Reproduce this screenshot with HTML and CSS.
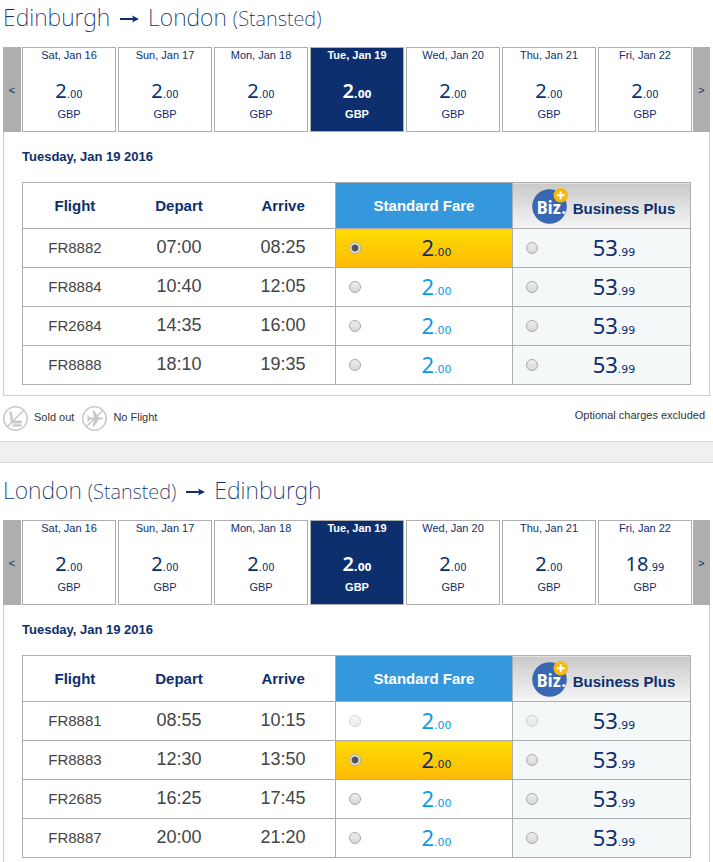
FILE: index.html
```
<!DOCTYPE html>
<html lang="en">
<head>
    <meta charset="UTF-8">
    <meta name="viewport" content="width=device-width, initial-scale=1.0">
    <title>Select flights</title>
    <link rel="stylesheet" href="styles.css">
</head>
<body>
<!-- shared icons -->
<svg class="sprite" aria-hidden="true">
    <symbol id="arrow" viewBox="0 0 20 10">
        <path d="M1 5H17" stroke="#0d2f6e" stroke-width="2"/>
        <path d="M13 1.5L20 5L13 8.5L14.5 5Z" fill="#0d2f6e"/>
    </symbol>
    <symbol id="biz" viewBox="0 0 36 36">
        <circle cx="17.5" cy="18.5" r="17.3" fill="#3a67b1"/>
        <text x="5" y="26" class="biz-text">Biz.</text>
        <circle cx="28.7" cy="7.3" r="7.2" fill="#f8b90f"/>
        <path d="M28.7 3.3v8M24.7 7.3h8" stroke="#fff" stroke-width="2"/>
    </symbol>
</svg>

<section class="trip">
    <h2>Edinburgh <svg class="arrow" role="img" aria-label="to"><use href="#arrow"/></svg> London <small>(Stansted)</small></h2>
    <div class="days">
        <button class="nav" aria-label="Previous days">&lt;</button>
        <div class="day-list">
            <button class="day"><span>Sat, Jan 16</span><span class="amount">2<small>.00</small></span><span>GBP</span></button>
            <button class="day"><span>Sun, Jan 17</span><span class="amount">2<small>.00</small></span><span>GBP</span></button>
            <button class="day"><span>Mon, Jan 18</span><span class="amount">2<small>.00</small></span><span>GBP</span></button>
            <button class="day selected"><span>Tue, Jan 19</span><span class="amount">2<small>.00</small></span><span>GBP</span></button>
            <button class="day"><span>Wed, Jan 20</span><span class="amount">2<small>.00</small></span><span>GBP</span></button>
            <button class="day"><span>Thu, Jan 21</span><span class="amount">2<small>.00</small></span><span>GBP</span></button>
            <button class="day"><span>Fri, Jan 22</span><span class="amount">2<small>.00</small></span><span>GBP</span></button>
        </div>
        <button class="nav next" aria-label="Next days">&gt;</button>
    </div>
    <div class="panel">
        <h3>Tuesday, Jan 19 2016</h3>
        <table class="flights">
            <colgroup><col class="info"><col class="info"><col class="info"><col class="fare"><col class="fare plus"></colgroup>
            <thead>
                <tr>
                    <th>Flight</th>
                    <th>Depart</th>
                    <th>Arrive</th>
                    <th class="standard">Standard Fare</th>
                    <th class="business"><div class="biz-head"><svg class="biz" aria-hidden="true"><use href="#biz"/></svg><span>Business Plus</span></div></th>
                </tr>
            </thead>
            <tbody>
                <tr>
                    <td>FR8882</td><td class="time">07:00</td><td class="time">08:25</td>
                    <td class="standard chosen"><label><input type="radio" name="out" checked><span class="price">2<small>.00</small></span></label></td>
                    <td class="business"><label><input type="radio" name="out"><span class="price">53<small>.99</small></span></label></td>
                </tr>
                <tr>
                    <td>FR8884</td><td class="time">10:40</td><td class="time">12:05</td>
                    <td class="standard"><label><input type="radio" name="out"><span class="price">2<small>.00</small></span></label></td>
                    <td class="business"><label><input type="radio" name="out"><span class="price">53<small>.99</small></span></label></td>
                </tr>
                <tr>
                    <td>FR2684</td><td class="time">14:35</td><td class="time">16:00</td>
                    <td class="standard"><label><input type="radio" name="out"><span class="price">2<small>.00</small></span></label></td>
                    <td class="business"><label><input type="radio" name="out"><span class="price">53<small>.99</small></span></label></td>
                </tr>
                <tr>
                    <td>FR8888</td><td class="time">18:10</td><td class="time">19:35</td>
                    <td class="standard"><label><input type="radio" name="out"><span class="price">2<small>.00</small></span></label></td>
                    <td class="business"><label><input type="radio" name="out"><span class="price">53<small>.99</small></span></label></td>
                </tr>
            </tbody>
        </table>
    </div>
    <div class="legend">
        <svg class="legend-icon" viewBox="0 0 25 25" aria-hidden="true">
            <circle cx="12.5" cy="12.5" r="11.7" fill="none" stroke="#c8c8cc" stroke-width="1.6"/>
            <path d="M4.5 20.5L20.5 4.5" stroke="#c8c8cc" stroke-width="1.6"/>
            <path d="M6.3 5.5h2.4l1.4 9h7.6q1.5 0 1.5 1.6q0 1.4-1.5 1.4H9.5q-1.4 0-1.6-1.4z" fill="#c8c8cc"/>
            <path d="M9.5 18.3h9v2.2h-9z" fill="#c8c8cc"/>
        </svg>
        <span>Sold out</span>
        <svg class="legend-icon" viewBox="0 0 25 25" aria-hidden="true">
            <circle cx="12.5" cy="12.5" r="11.7" fill="none" stroke="#c8c8cc" stroke-width="1.6"/>
            <path d="M4.5 20.5L20.5 4.5" stroke="#c8c8cc" stroke-width="1.6"/>
            <path d="M5 9.5h1.3l1.8 2.1h4L10.5 4.5h1.8l4.4 7.1H19q2.2 0 2.2.9t-2.2.9h-2.3l-4.4 7.1h-1.8l1.6-7.1h-4l-1.8 2.1H5l.8-3z" fill="#c8c8cc"/>
        </svg>
        <span>No Flight</span>
        <span class="note">Optional charges excluded</span>
    </div>
</section>

<div class="divider"></div>

<section class="trip">
    <h2>London <small>(Stansted)</small> <svg class="arrow" role="img" aria-label="to"><use href="#arrow"/></svg> Edinburgh</h2>
    <div class="days">
        <button class="nav" aria-label="Previous days">&lt;</button>
        <div class="day-list">
            <button class="day"><span>Sat, Jan 16</span><span class="amount">2<small>.00</small></span><span>GBP</span></button>
            <button class="day"><span>Sun, Jan 17</span><span class="amount">2<small>.00</small></span><span>GBP</span></button>
            <button class="day"><span>Mon, Jan 18</span><span class="amount">2<small>.00</small></span><span>GBP</span></button>
            <button class="day selected"><span>Tue, Jan 19</span><span class="amount">2<small>.00</small></span><span>GBP</span></button>
            <button class="day"><span>Wed, Jan 20</span><span class="amount">2<small>.00</small></span><span>GBP</span></button>
            <button class="day"><span>Thu, Jan 21</span><span class="amount">2<small>.00</small></span><span>GBP</span></button>
            <button class="day"><span>Fri, Jan 22</span><span class="amount">18<small>.99</small></span><span>GBP</span></button>
        </div>
        <button class="nav next" aria-label="Next days">&gt;</button>
    </div>
    <div class="panel">
        <h3>Tuesday, Jan 19 2016</h3>
        <table class="flights">
            <colgroup><col class="info"><col class="info"><col class="info"><col class="fare"><col class="fare plus"></colgroup>
            <thead>
                <tr>
                    <th>Flight</th>
                    <th>Depart</th>
                    <th>Arrive</th>
                    <th class="standard">Standard Fare</th>
                    <th class="business"><div class="biz-head"><svg class="biz" aria-hidden="true"><use href="#biz"/></svg><span>Business Plus</span></div></th>
                </tr>
            </thead>
            <tbody>
                <tr>
                    <td>FR8881</td><td class="time">08:55</td><td class="time">10:15</td>
                    <td class="standard"><label><input type="radio" name="back" disabled><span class="price">2<small>.00</small></span></label></td>
                    <td class="business"><label><input type="radio" name="back" disabled><span class="price">53<small>.99</small></span></label></td>
                </tr>
                <tr>
                    <td>FR8883</td><td class="time">12:30</td><td class="time">13:50</td>
                    <td class="standard chosen"><label><input type="radio" name="back" checked><span class="price">2<small>.00</small></span></label></td>
                    <td class="business"><label><input type="radio" name="back"><span class="price">53<small>.99</small></span></label></td>
                </tr>
                <tr>
                    <td>FR2685</td><td class="time">16:25</td><td class="time">17:45</td>
                    <td class="standard"><label><input type="radio" name="back"><span class="price">2<small>.00</small></span></label></td>
                    <td class="business"><label><input type="radio" name="back"><span class="price">53<small>.99</small></span></label></td>
                </tr>
                <tr>
                    <td>FR8887</td><td class="time">20:00</td><td class="time">21:20</td>
                    <td class="standard"><label><input type="radio" name="back"><span class="price">2<small>.00</small></span></label></td>
                    <td class="business"><label><input type="radio" name="back"><span class="price">53<small>.99</small></span></label></td>
                </tr>
            </tbody>
        </table>
    </div>
</section>
</body>
</html>
```
FILE: styles.css
```
* {
    box-sizing: border-box;
}

body {
    margin: 0;
    background-color: #fff;
    color: #0d2f6e;
    font-family: "Liberation Sans", Arial, sans-serif;
    font-size: 11px;
}

button {
    font-family: inherit;
    font-size: 11px;
    color: #0d2f6e;
    cursor: pointer;
}

.sprite {
    display: none;
}

.trip {
    padding: 0 3px;
}

h2 {
    margin: 0;
    height: 47px;
    font-family: "Noto Sans", "Open Sans", sans-serif;
    font-size: 23px;
    font-weight: 200;
    line-height: 34px;
}

h2 small {
    font-size: 20px;
}

.arrow {
    width: 20px;
    height: 10px;
    margin: 0 3px;
    vertical-align: 2px;
}

/* day picker */
.days {
    display: flex;
    gap: 1px;
    height: 85px;
}

.nav {
    width: 18px;
    padding: 0;
    border: none;
    background-color: #aeaeae;
}

.nav.next {
    width: 17px;
}

.day-list {
    flex: 1;
    display: grid;
    grid-template-columns: repeat(7, 1fr);
    gap: 2px;
}

.day {
    display: flex;
    flex-direction: column;
    align-items: center;
    padding: 0;
    border: 1px solid #aeaeae;
    background-color: #fff;
    line-height: 14px;
}

.day.selected {
    background-color: #0d2f6e;
    color: #fff;
    font-weight: bold;
}

.amount {
    margin: 16px 0 0;
    font-family: "Noto Sans", "Open Sans", sans-serif;
    font-size: 20px;
    line-height: 25px;
}

.selected .amount {
    font-weight: 600;
}

.amount small {
    font-family: "DejaVu Sans", Verdana, sans-serif;
    font-size: 10px;
}

/* flights */
.panel {
    padding: 17px 18px 10px;
    border: 1px solid #ccc;
    border-top: none;
}

h3 {
    margin: 0 0 17px;
    font-size: 13px;
    line-height: 16px;
}

.flights {
    width: 100%;
    table-layout: fixed;
    border-collapse: collapse;
    border: 1px solid #aeaeae;
    text-align: center;
    color: #444;
}

.fare {
    width: 177px;
}

.fare.plus {
    width: 178px;
}

.flights th {
    height: 46px;
    padding: 0;
    font-size: 15px;
    color: #0d2f6e;
}

.flights td {
    height: 39px;
    padding: 0 0 2px;
    border-top: 1px solid #aeaeae;
    font-size: 15px;
}

.flights td.time {
    font-size: 18px;
}

.flights .standard,
.flights .business {
    padding: 0;
    border-left: 1px solid #aeaeae;
}

.flights th.standard {
    background-color: #3598dc;
    color: #fff;
}

.flights th.business {
    background-image: linear-gradient(#c9c9c9, #f6f6f6);
}

.biz-head {
    display: flex;
    align-items: center;
    justify-content: center;
    gap: 5px;
    padding-left: 4px;
}

.biz-head span {
    padding-top: 6px;
}

.biz {
    width: 36px;
    height: 36px;
}

.biz-text {
    font-family: "Roboto Condensed", Roboto, "Open Sans", sans-serif;
    font-size: 19px;
    font-weight: bold;
    fill: #fff;
}

td.business {
    background-color: #f4f8f9;
}

.flights label {
    display: flex;
    align-items: center;
    padding-left: 13px;
}

.price {
    flex: 1;
    padding-top: 3px;
    font-family: "Noto Sans", "Open Sans", sans-serif;
    font-size: 22px;
    line-height: 26px;
    color: #0d2f6e;
}

.price small {
    font-family: "DejaVu Sans", Verdana, sans-serif;
    font-size: 11px;
}

.standard .price {
    color: #0a9be3;
}

td.chosen {
    background-image: linear-gradient(#ffdc00, #fdb907);
}

.chosen .price {
    color: #0d2f6e;
}

input[type="radio"] {
    appearance: none;
    width: 12px;
    height: 12px;
    margin: 0;
    border: 1px solid #aaa;
    border-radius: 50%;
    background-image: linear-gradient(#eee, #d8d8d8);
}

input[type="radio"]:checked {
    background-image: radial-gradient(circle, #555 3px, #e8e8e8 4px);
}

input[type="radio"]:disabled {
    opacity: 0.5;
}

/* legend under the table */
.legend {
    display: flex;
    align-items: center;
    height: 45px;
    padding-right: 5px;
    color: #333;
}

.legend span {
    padding-bottom: 3px;
}

.legend-icon {
    width: 25px;
    height: 25px;
    margin-right: 6px;
}

.legend span + .legend-icon {
    margin-left: 8px;
}

.legend .note {
    margin-left: auto;
    padding-bottom: 8px;
}

.divider {
    height: 22px;
    border-top: 1px solid #ddd;
    border-bottom: 1px solid #ddd;
    background-color: #f0f0f0;
}

.divider + .trip h2 {
    height: 57px;
    padding-top: 10px;
}
```
